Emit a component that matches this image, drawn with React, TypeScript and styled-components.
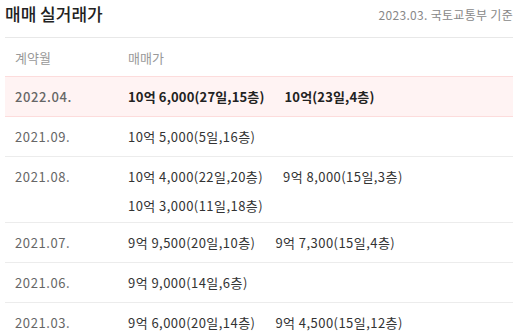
import React from 'react';
import styled, { createGlobalStyle } from 'styled-components';

const Global = createGlobalStyle`
  body {
    margin: 0;
    background: #fff;
    font-family: "Noto Sans CJK KR", "Noto Sans", sans-serif;
  }
`;

const Wrap = styled.div`
  width: 508px;
  margin-left: 5px;
`;

const Head = styled.div`
  display: flex;
  justify-content: space-between;
  align-items: center;
  height: 36px;
  padding-bottom: 1px;
  border-bottom: 1px solid #e8e8e8;
`;

const Title = styled.h2`
  margin: 0 0 9px;
  font-size: 17px;
  font-weight: 500;
  color: #222;
`;

const Source = styled.span`
  margin-bottom: 7px;
  font-size: 12px;
  color: #888;
  letter-spacing: 0.3px;
`;

const Row = styled.div<{ $hot?: boolean; $header?: boolean }>`
  display: flex;
  align-items: ${p => (p.$header ? 'center' : 'flex-start')};
  min-height: ${p => (p.$header ? '38px' : '39px')};
  border-bottom: 1px solid ${p => (p.$hot || p.$header ? '#fddcdc' : '#ececec')};
  background: ${p => (p.$hot ? '#fff3f3' : '#fff')};
  font-size: 13px;
`;

const Month = styled.div<{ $header?: boolean; $hot?: boolean }>`
  width: 113px;
  flex-shrink: 0;
  padding-left: 10px;
  padding-top: ${p => (p.$header ? '0' : '10px')};
  color: ${p => (p.$header ? '#999' : '#666')};
  font-weight: ${p => (p.$hot ? 500 : 400)};
  letter-spacing: ${p => (p.$header ? '0' : '0.6px')};
`;

const Prices = styled.div<{ $header?: boolean }>`
  flex: 1;
  display: flex;
  flex-wrap: wrap;
  padding: ${p => (p.$header ? '0' : '10px 0 7px')};
  row-gap: 5px;
  color: ${p => (p.$header ? '#999' : '#333')};
`;

const Price = styled.span<{ $hot?: boolean }>`
  margin-right: 20px;
  line-height: 19px;
  letter-spacing: ${p => (p.$hot ? '0.15px' : '0.45px')};
  font-weight: ${p => (p.$hot ? 700 : 400)};
  color: ${p => (p.$hot ? '#222' : '#333')};
`;

const Breaker = styled.span`
  flex-basis: 100%;
  height: 0;
`;

type Deal = { month: string; prices: string[][]; hot?: boolean };

const deals: Deal[] = [
  { month: '2022.04.', prices: [['10억 6,000(27일,15층)', '10억(23일,4층)']], hot: true },
  { month: '2021.09.', prices: [['10억 5,000(5일,16층)']] },
  { month: '2021.08.', prices: [['10억 4,000(22일,20층)', '9억 8,000(15일,3층)'], ['10억 3,000(11일,18층)']] },
  { month: '2021.07.', prices: [['9억 9,500(20일,10층)', '9억 7,300(15일,4층)']] },
  { month: '2021.06.', prices: [['9억 9,000(14일,6층)']] },
  { month: '2021.03.', prices: [['9억 6,000(20일,14층)', '9억 4,500(15일,12층)']] },
];

export default function App() {
  return (
    <Wrap>
      <Global />
      <Head>
        <Title>매매 실거래가</Title>
        <Source>2023.03. 국토교통부 기준</Source>
      </Head>
      <Row $header>
        <Month $header>계약월</Month>
        <Prices $header>매매가</Prices>
      </Row>
      {deals.map(d => (
        <Row key={d.month} $hot={d.hot}>
          <Month $hot={d.hot}>{d.month}</Month>
          <Prices>
            {d.prices.map((line, i) => (
              <React.Fragment key={i}>
                {i > 0 && <Breaker />}
                {line.map(p => (
                  <Price key={p} $hot={d.hot}>{p}</Price>
                ))}
              </React.Fragment>
            ))}
          </Prices>
        </Row>
      ))}
    </Wrap>
  );
}
